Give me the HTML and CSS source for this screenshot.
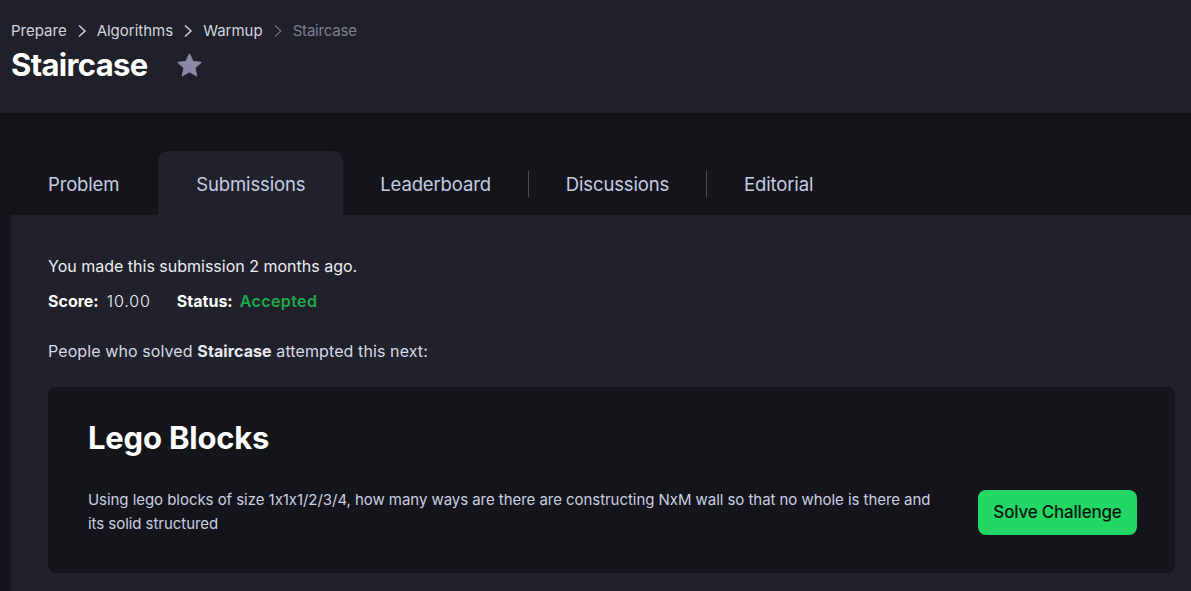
FILE: index.html
```html
<!DOCTYPE html>
<html lang="en">
<head>
<meta charset="utf-8">
<title>Staircase | Submissions</title>
<link rel="stylesheet" href="styles.css">
</head>
<body>
<header class="page-header">
  <nav class="crumbs">
    <a class="crumb">Prepare</a>
    <svg class="chev" viewBox="0 0 10 14" width="10" height="14"><path d="M2 1.5 L8 7 L2 12.5" fill="none" stroke="currentColor" stroke-width="1.5"/></svg>
    <a class="crumb">Algorithms</a>
    <svg class="chev" viewBox="0 0 10 14" width="10" height="14"><path d="M2 1.5 L8 7 L2 12.5" fill="none" stroke="currentColor" stroke-width="1.5"/></svg>
    <a class="crumb">Warmup</a>
    <svg class="chev dim" viewBox="0 0 10 14" width="10" height="14"><path d="M2 1.5 L8 7 L2 12.5" fill="none" stroke="currentColor" stroke-width="1.2"/></svg>
    <span class="crumb current">Staircase</span>
  </nav>
  <div class="title-row">
    <h1 class="title">Staircase</h1>
    <svg class="star" viewBox="0 0 24 24" width="27" height="27"><path d="M12 1.8 L15.1 8.4 L22.3 9.2 L16.9 14.1 L18.4 21.2 L12 17.6 L5.6 21.2 L7.1 14.1 L1.7 9.2 L8.9 8.4 Z" fill="currentColor" stroke="currentColor" stroke-width="1" stroke-linejoin="round"/></svg>
  </div>
</header>

<main class="main">
  <div class="tabs">
    <div class="tab">Problem</div>
    <div class="tab active">Submissions</div>
    <div class="tab">Leaderboard</div>
    <div class="sep"></div>
    <div class="tab">Discussions</div>
    <div class="sep"></div>
    <div class="tab">Editorial</div>
  </div>
  <section class="panel">
    <p class="line first">You made this submission 2 months ago.</p>
    <p class="line score"><b>Score:</b><span class="num">10.00</span><b class="status">Status:</b><span class="ok">Accepted</span></p>
    <p class="line next">People who solved <b>Staircase</b> attempted this next:</p>
    <div class="card">
      <h2 class="card-title">Lego Blocks</h2>
      <div class="card-row">
        <p class="card-desc">Using lego blocks of size 1x1x1/2/3/4, how many ways are there are constructing NxM wall so that no whole is there and its solid structured</p>
        <button class="solve">Solve Challenge</button>
      </div>
    </div>
  </section>
</main>
</body>
</html>
```

FILE: styles.css
```css
* { box-sizing: border-box; }
html, body { margin: 0; padding: 0; }
body {
  background: #14151a;
  font-family: Inter, "Noto Sans", sans-serif;
  font-feature-settings: "calt" 0;
  color: #e6e7ee;
  height: 591px;
  overflow: hidden;
}
.page-header {
  background: #1f2029;
  height: 113px;
  padding: 21px 11px 0;
}
.crumbs {
  display: flex;
  align-items: center;
  gap: 10px;
  font-size: 15px;
  line-height: 20px;
  color: #d3d5de;
}
.crumb { color: #d3d5de; }
.crumb.current { color: #7e8090; letter-spacing: -0.2px; }
.chev { color: #cfd1da; }
.chev.dim { color: #6f717e; }
.title-row {
  display: flex;
  align-items: center;
  margin-top: 6px;
}
.title {
  margin: 0;
  font-size: 31px;
  line-height: 36px;
  font-weight: 700;
  color: #ffffff;
  letter-spacing: -0.65px;
}
.star {
  color: #8a89a6;
  margin-left: 28px;
}
.main { padding-top: 38px; }
.tabs {
  display: flex;
  align-items: center;
  height: 64px;
  padding-left: 11px;
}
.tab {
  height: 64px;
  display: flex;
  align-items: center;
  padding: 2px 37px 0 37px;
  font-size: 18.5px;
  letter-spacing: -0.15px;
  color: #c5cce2;
}
.tab:first-child { padding-right: 39px; }
.tab.active {
  background: #21212b;
  border-radius: 10px 10px 0 0;
  padding: 2px 38px 0;
}
.sep {
  width: 1px;
  height: 26px;
  margin-top: 2px;
  background: #4a4c57;
}
.panel {
  margin-left: 11px;
  background: #21212b;
  padding: 40px 16px 30px 37px;
  min-height: 400px;
}
.line {
  margin: 0;
  font-size: 16px;
  line-height: 22px;
  color: #eceef4;
}
.line b { font-weight: 700; color: #ffffff; }
.score { margin-top: 13px; display: flex; align-items: baseline; }
.num { margin-left: 8px; letter-spacing: 0.9px; font-weight: 300; color: #f2f3f7; }
.status { margin-left: 26px; }
.ok { margin-left: 7px; color: #1fa94d; font-weight: 600; letter-spacing: 0.4px; }
.next { margin-top: 28px; color: #d6d9e4; letter-spacing: 0.1px; }
.next b { color: #e8eaf2; }
.card {
  margin-top: 25px;
  background: #14151a;
  border-radius: 8px;
  padding: 32px 38px 37px 40px;
}
.card-title {
  margin: 0;
  font-size: 31px;
  line-height: 38px;
  font-weight: 700;
  color: #ffffff;
  letter-spacing: -0.2px;
}
.card-row {
  display: flex;
  align-items: center;
  margin-top: 31px;
}
.card-desc {
  flex: 1;
  margin: 0 45px 0 0;
  font-size: 15px;
  line-height: 24px;
  color: #c9cfe0;
  letter-spacing: -0.05px;
}
.solve {
  flex: none;
  width: 159px;
  height: 45px;
  border: 0;
  border-radius: 8px;
  background: #22d763;
  color: #0c1510;
  font-family: inherit;
  font-size: 17px;
  font-weight: 500;
  letter-spacing: -0.2px;
}
```
